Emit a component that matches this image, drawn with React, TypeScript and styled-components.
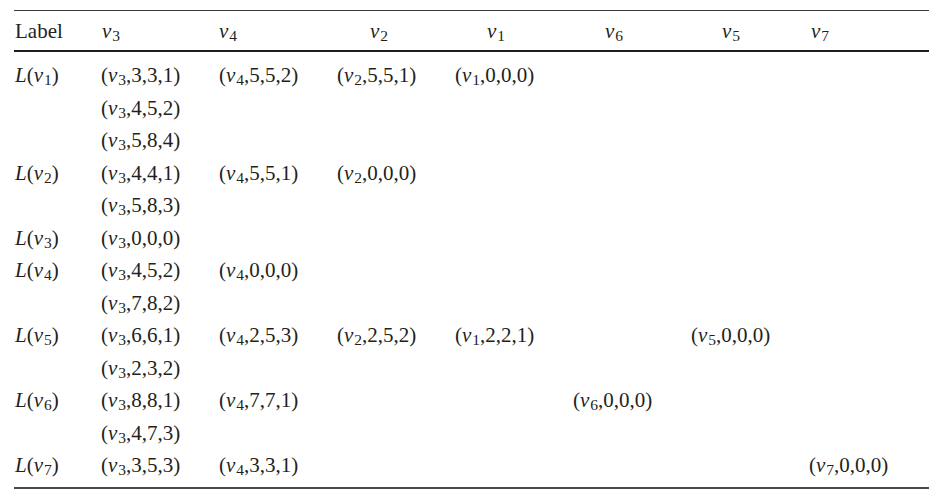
import styled, { createGlobalStyle } from 'styled-components'

const GlobalStyle = createGlobalStyle`
  html, body {
    margin: 0;
    padding: 0;
    background: #ffffff;
  }
  body {
    font-family: "Liberation Serif", "Times New Roman", serif;
    color: #231f20;
  }
`

type Entry = [number, number, number]

type Group = {
  label: number
  cells: { [col: number]: Entry[] }
}

// column order in the header
const columns = [3, 4, 2, 1, 6, 5, 7]
const headerIndent = [1, 0, 33, 32, 32, 31, 2]

const groups: Group[] = [
  { label: 1, cells: { 3: [[3, 3, 1], [4, 5, 2], [5, 8, 4]], 4: [[5, 5, 2]], 2: [[5, 5, 1]], 1: [[0, 0, 0]] } },
  { label: 2, cells: { 3: [[4, 4, 1], [5, 8, 3]], 4: [[5, 5, 1]], 2: [[0, 0, 0]] } },
  { label: 3, cells: { 3: [[0, 0, 0]] } },
  { label: 4, cells: { 3: [[4, 5, 2], [7, 8, 2]], 4: [[0, 0, 0]] } },
  { label: 5, cells: { 3: [[6, 6, 1], [2, 3, 2]], 4: [[2, 5, 3]], 2: [[2, 5, 2]], 1: [[2, 2, 1]], 5: [[0, 0, 0]] } },
  { label: 6, cells: { 3: [[8, 8, 1], [4, 7, 3]], 4: [[7, 7, 1]], 6: [[0, 0, 0]] } },
  { label: 7, cells: { 3: [[3, 5, 3]], 4: [[3, 3, 1]], 7: [[0, 0, 0]] } },
]

const V = ({ n }: { n: number }) => (
  <Var>
    v<Sub>{n}</Sub>
  </Var>
)

const App = () => {
  return (
    <Page>
      <GlobalStyle />
      <Table>
        <HeaderRow>
          <HeadCell $indent={0}>Label</HeadCell>
          {columns.map((c, i) => (
            <HeadCell key={c} $indent={headerIndent[i]}>
              <V n={c} />
            </HeadCell>
          ))}
        </HeaderRow>
        <Body>
          {groups.map((g) => (
            <GroupRow key={g.label}>
              <Cell>
                <Line>
                  <Var>L</Var>(<V n={g.label} />)
                </Line>
              </Cell>
              {columns.map((c) => (
                <Cell key={c}>
                  {(g.cells[c] || []).map((e, k) => (
                    <Line key={k}>
                      (<V n={c} />,{e.join(',')})
                    </Line>
                  ))}
                </Cell>
              ))}
            </GroupRow>
          ))}
        </Body>
      </Table>
    </Page>
  )
}

export default App

const Page = styled.div`
  width: 952px;
  height: 496px;
  padding: 10px 0 0 14px;
  box-sizing: border-box;
`

const Table = styled.div`
  width: 915px;
  border-top: 1px solid #3a3a3a;
  border-bottom: 2px solid #4a4a4a;
  font-size: 21px;
`

const gridCols = `86px repeat(7, 118px)`

const HeaderRow = styled.div`
  display: grid;
  grid-template-columns: ${gridCols};
  height: 39px;
  align-items: center;
  border-bottom: 2px solid #1f1f1f;
`

const HeadCell = styled.div<{ $indent: number }>`
  padding-left: ${(p) => p.$indent + 1}px;
  line-height: 1;
  padding-top: 1px;
`

const Body = styled.div`
  padding: 7px 0 5px;
`

const GroupRow = styled.div`
  display: grid;
  grid-template-columns: ${gridCols};
`

const Cell = styled.div`
  display: flex;
  flex-direction: column;
  padding-left: 1px;
`

const Line = styled.div`
  height: 32.5px;
  line-height: 32.5px;
  white-space: nowrap;
`

const Var = styled.span`
  font-style: italic;
`

const Sub = styled.sub`
  font-style: normal;
  font-size: 74%;
  vertical-align: -0.22em;
  line-height: 0;
  margin-left: 1px;
`
